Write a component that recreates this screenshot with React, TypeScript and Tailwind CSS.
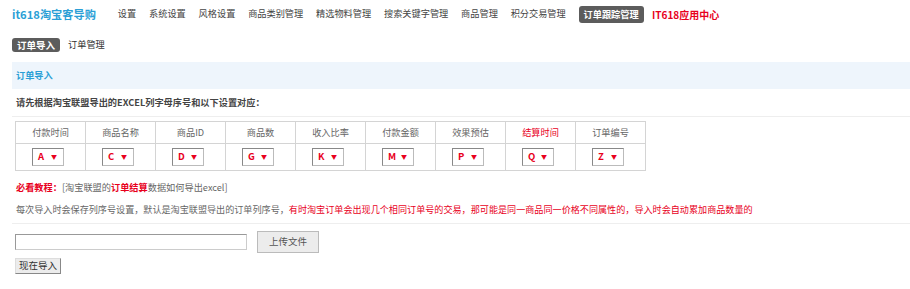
import React from "react"

const navItems = ["设置", "系统设置", "风格设置", "商品类别管理", "精选物料管理", "搜索关键字管理", "商品管理", "积分交易管理"]

const columns = [
  { name: "付款时间", value: "A" },
  { name: "商品名称", value: "C" },
  { name: "商品ID", value: "D" },
  { name: "商品数", value: "G" },
  { name: "收入比率", value: "K" },
  { name: "付款金额", value: "M" },
  { name: "效果预估", value: "P" },
  { name: "结算时间", value: "Q", red: true },
  { name: "订单编号", value: "Z" },
]

const font = { fontFamily: '"Noto Sans CJK SC", "Liberation Sans", sans-serif' }

const App = () => {
  return (
    <div className="w-[910px] h-[289px] bg-white text-[9.2px] text-[#666] overflow-hidden" style={font}>
      {/* top nav */}
      <div className="flex items-center h-[28px] pl-[12px]">
        <span className="text-[11.2px] font-bold text-[#2b9fd6] mr-[22px]">it618淘宝客导购</span>
        <div className="flex items-center gap-[12.8px] text-[#444]">
          {navItems.map((n) => (
            <span key={n}>{n}</span>
          ))}
          <span className="bg-[#5c5c5c] text-white font-bold rounded-[3px] px-[5px] leading-[17px]">订单跟踪管理</span>
          <span className="text-[#e8001c] font-bold -ml-[4.5px] text-[10px]">IT618应用中心</span>
        </div>
      </div>

      {/* sub nav */}
      <div className="flex items-center gap-[8px] pl-[12px] mt-[10px] h-[14px]">
        <span className="bg-[#5c5c5c] text-white font-bold rounded-[3px] px-[5px] leading-[14px] text-[9.5px]">订单导入</span>
        <span className="text-[#333]">订单管理</span>
      </div>

      {/* panel */}
      <div className="ml-[12px] mt-[10px]">
        <div className="h-[27px] bg-[#eef5fc] flex items-center pl-[4px]">
          <span className="text-[#2b9fd6] font-bold">订单导入</span>
        </div>

        <div className="pl-[4px] h-[27px] flex items-center font-bold text-[#444]">
          请先根据淘宝联盟导出的EXCEL列字母序号和以下设置对应：
        </div>
        <div className="border-t border-[#eee]" />

        <div className="pl-[3px] mt-[4px]">
          <div className="grid grid-cols-[repeat(9,70px)] border-l border-t border-[#d4d4d4] w-max">
            {columns.map((c) => (
              <div
                key={c.name}
                className={`h-[22px] flex items-center justify-center border-r border-b border-[#d4d4d4] ${c.red ? "text-[#e8001c]" : "text-[#666]"}`}
              >
                {c.name}
              </div>
            ))}
            {columns.map((c) => (
              <div key={c.name + "s"} className="h-[27px] flex items-center pl-[16px] border-r border-b border-[#d4d4d4]">
                <div className="w-[32px] h-[18px] border border-[#bbb] border-l-[#888] border-t-[#888] flex items-center justify-between pl-[5px] pr-[6px] bg-white">
                  <span className="text-[#e8001c] font-bold text-[9.5px] leading-none">{c.value}</span>
                  <span className="text-[#e8001c] text-[6px] leading-none">▼</span>
                </div>
              </div>
            ))}
          </div>
        </div>

        <div className="pl-[4px] mt-[8px] h-[18px] flex items-center">
          <span className="text-[#e8001c] font-bold">必看教程：</span>
          <span>[淘宝联盟的</span>
          <span className="text-[#e8001c] font-bold">订单结算</span>
          <span>数据如何导出excel]</span>
        </div>
        <div className="pl-[4px] mt-[4px] h-[18px] flex items-center whitespace-nowrap text-[9.1px]">
          <span>每次导入时会保存列序号设置，默认是淘宝联盟导出的订单列序号，</span>
          <span className="text-[#e8001c]">有时淘宝订单会出现几个相同订单号的交易，那可能是同一商品同一价格不同属性的，导入时会自动累加商品数量的</span>
        </div>
        <div className="mt-[4px] border-t border-[#eee]" />

        <div className="pl-[3px] mt-[7px] flex items-center gap-[10px]">
          <div className="w-[232px] h-[16px] border border-[#999] border-r-[#ccc] border-b-[#ccc] bg-white" />
          <button className="w-[62px] h-[22px] border border-[#bbb] bg-[#ececec] text-[#555] text-[9.5px] leading-none">上传文件</button>
        </div>
        <div className="pl-[3px] mt-[5px] flex">
          <button className="w-[46px] h-[16px] border border-[#888] border-t-[#ddd] border-l-[#ddd] bg-[#ececec] text-[#333] text-[9.5px] leading-none">现在导入</button>
        </div>
      </div>
    </div>
  )
}

export default App
